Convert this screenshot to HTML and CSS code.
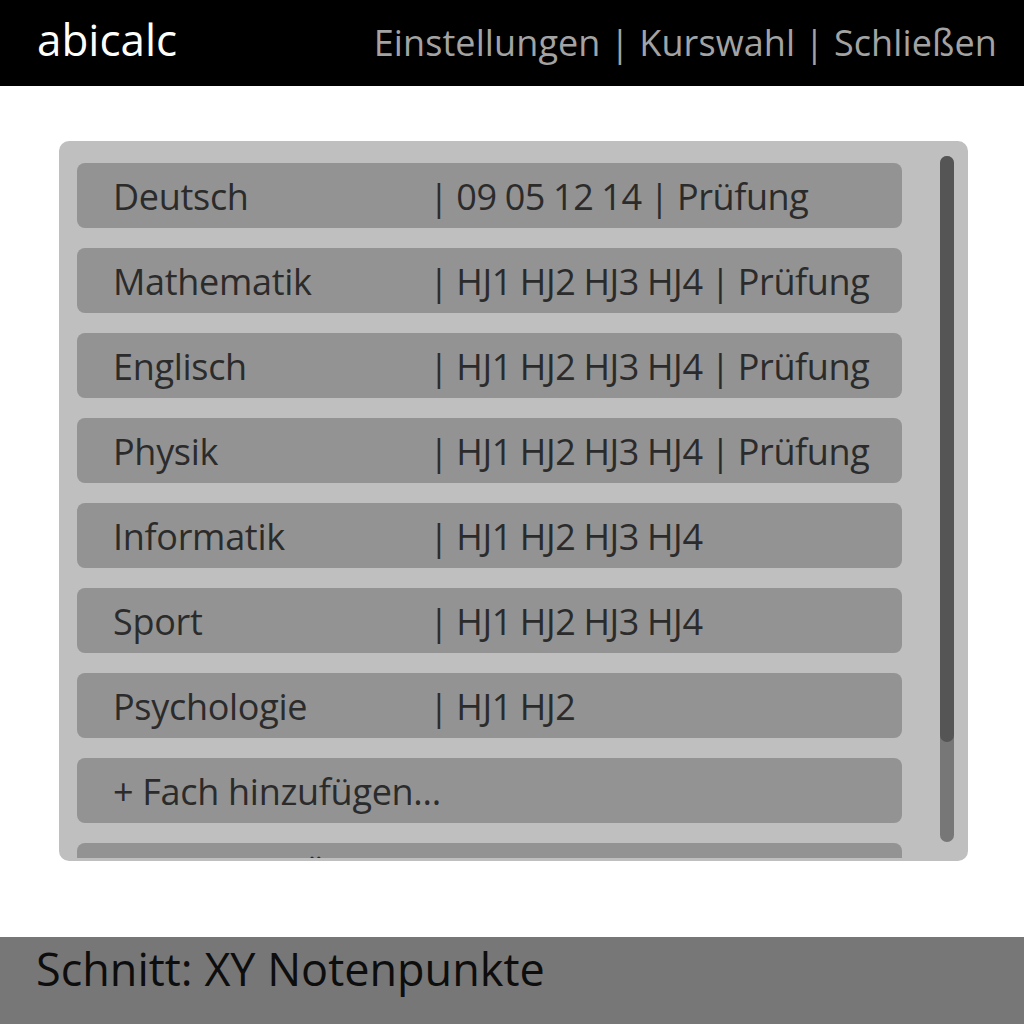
FILE: index.html
```html
<!DOCTYPE html>
<html lang="de">
<head>
<meta charset="utf-8">
<title>abicalc</title>
<link rel="stylesheet" href="styles.css">
</head>
<body>
<div class="app">
  <header class="topbar">
    <div class="brand">abicalc</div>
    <nav class="nav">Einstellungen | Kurswahl | Schließen</nav>
  </header>
  <main class="main">
    <section class="panel">
      <div class="list">
        <div class="row"><span class="name">Deutsch</span><span class="detail">| 09 05 12 14 | Prüfung</span></div>
        <div class="row"><span class="name">Mathematik</span><span class="detail">| HJ1 HJ2 HJ3 HJ4 | Prüfung</span></div>
        <div class="row"><span class="name">Englisch</span><span class="detail">| HJ1 HJ2 HJ3 HJ4 | Prüfung</span></div>
        <div class="row"><span class="name">Physik</span><span class="detail">| HJ1 HJ2 HJ3 HJ4 | Prüfung</span></div>
        <div class="row"><span class="name">Informatik</span><span class="detail">| HJ1 HJ2 HJ3 HJ4</span></div>
        <div class="row"><span class="name">Sport</span><span class="detail">| HJ1 HJ2 HJ3 HJ4</span></div>
        <div class="row"><span class="name">Psychologie</span><span class="detail">| HJ1 HJ2</span></div>
        <div class="row"><span class="name">+ Fach hinzufügen...</span></div>
        <div class="row"><span class="name">Halbjahres-Übersicht</span></div>
      </div>
      <div class="scrollbar"><div class="thumb"></div></div>
    </section>
  </main>
  <footer class="footer">Schnitt: XY Notenpunkte</footer>
</div>
</body>
</html>
```

FILE: styles.css
```css
* { box-sizing: border-box; }
html, body { margin: 0; padding: 0; }
body {
  font-family: "Open Sans", "Noto Sans", sans-serif;
  background: #ffffff;
}
.app {
  width: 1024px;
  height: 1024px;
  display: flex;
  flex-direction: column;
}
.topbar {
  height: 86px;
  flex-shrink: 0;
  background: #000000;
  display: flex;
  justify-content: space-between;
  align-items: baseline;
  padding: 17px 27px 0 37px;
  line-height: 1;
}
.brand {
  color: #ffffff;
  font-size: 44px;
}
.nav {
  color: #a3a3a3;
  font-size: 36px;
  letter-spacing: 0.1px;
}
.main {
  flex: 1;
  padding: 55px 56px 0 59px;
}
.panel {
  height: 720px;
  background: #bfbfbf;
  border-radius: 10px;
  display: flex;
  padding: 0 14px 0 18px;
  overflow: hidden;
}
.list {
  width: 825px;
  flex-shrink: 0;
  padding-top: 22px;
  margin-bottom: 3px;
  display: flex;
  flex-direction: column;
  gap: 20px;
  overflow: hidden;
}
.row {
  flex-shrink: 0;
  height: 65px;
  background: #939393;
  border-radius: 8px;
  display: flex;
  align-items: center;
  padding: 3px 0 0 36px;
  font-size: 36px;
  line-height: 1;
  color: #2b2b2b;
  white-space: nowrap;
}
.name {
  width: 316px;
  flex-shrink: 0;
  letter-spacing: -0.3px;
}
.detail {
  letter-spacing: -0.4px;
  word-spacing: -1px;
}
.scrollbar {
  width: 14px;
  margin: 15px 0 19px 38px;
  background: #777777;
  border-radius: 7px;
  display: flex;
  flex-direction: column;
}
.thumb {
  height: 586px;
  background: #555555;
  border-radius: 7px;
}
.footer {
  height: 87px;
  flex-shrink: 0;
  background: #777777;
  color: #0d0d0d;
  font-size: 45px;
  line-height: 1;
  padding: 9px 0 0 36px;
}
```
